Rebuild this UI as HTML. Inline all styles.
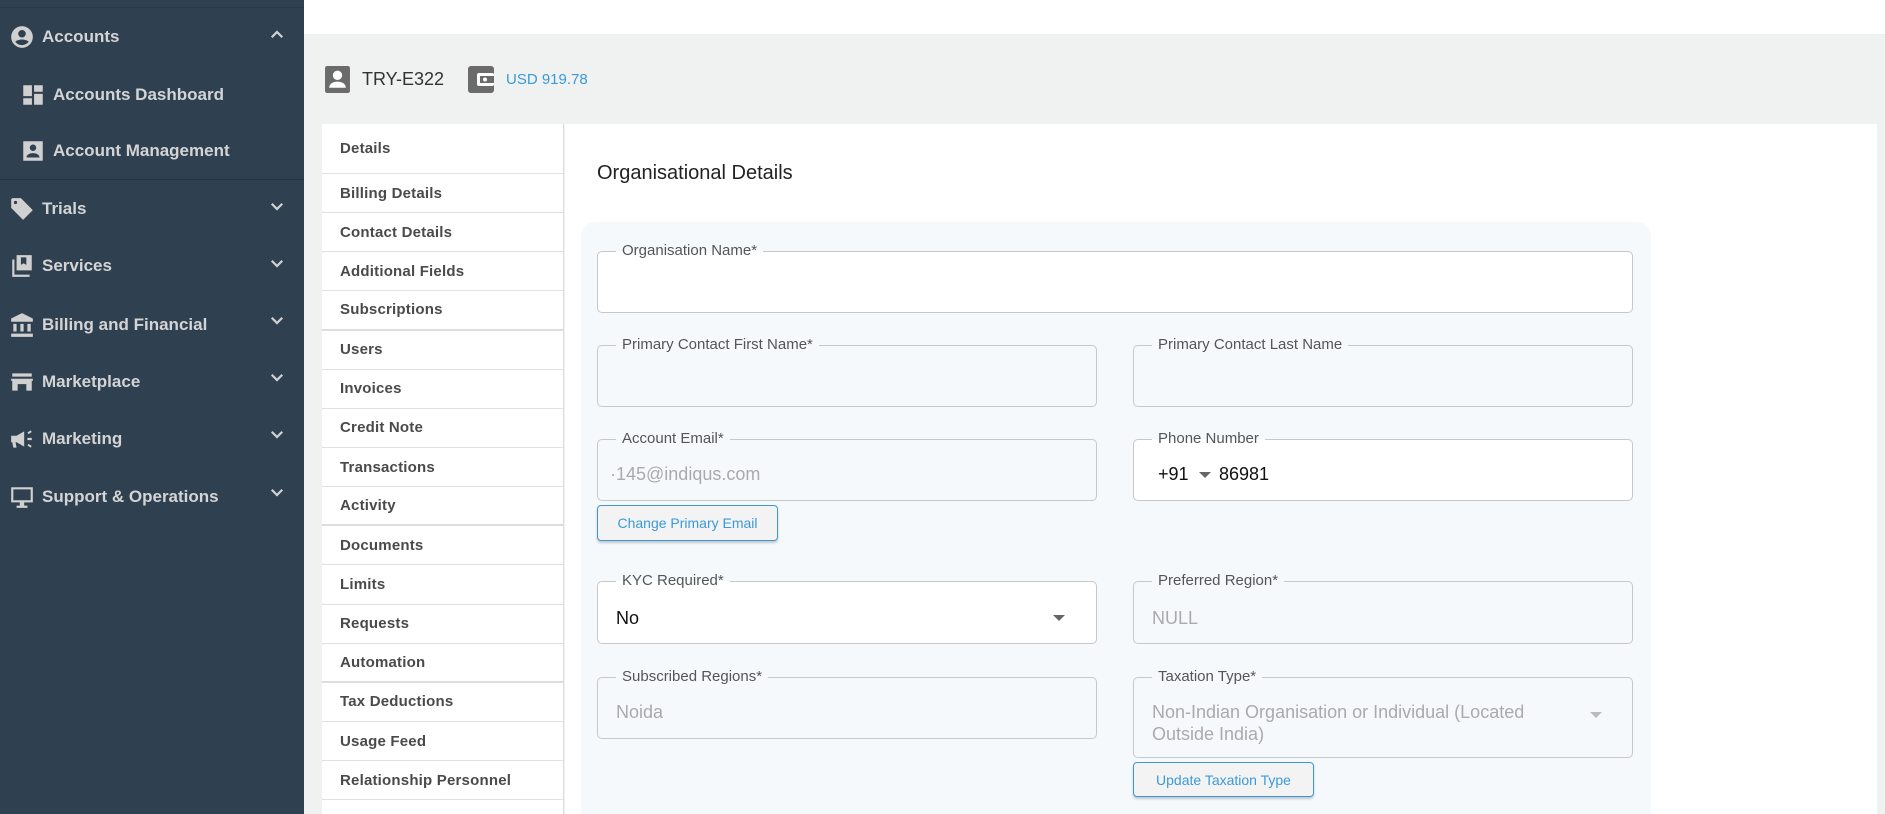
<!DOCTYPE html>
<html style="overflow:hidden"><head><meta charset="utf-8"><style>
*{box-sizing:border-box;margin:0;padding:0}
html,body{width:1885px;height:814px;overflow:hidden}
body{background:#f0f1f1;font-family:"Liberation Sans",sans-serif;position:relative}
.sb{position:absolute;left:0;top:0;width:304px;height:814px;background:#2f4050}
.sb .topline{position:absolute;left:0;top:7px;width:304px;height:1px;background:#2a3a48}
.sep{position:absolute;left:0;top:179px;width:304px;height:1px;background:#26343f}
.ni{position:absolute;left:9px;color:#d4d4d4;font-size:17px;font-weight:bold;display:flex;align-items:center;height:30px}
.ni svg{width:26px;height:26px;margin-right:7px;fill:#d0d0d0}
.ni.sub{left:20px}
.chev{position:absolute;left:268px;width:18px;height:18px}
.topbar{position:absolute;left:304px;top:0;width:1581px;height:34px;background:#fff}
.hdr{position:absolute;top:64px;height:30px;display:flex;align-items:center}
.tabs{position:absolute;left:322px;top:124px;width:242px;height:690px;background:#fff;border-right:1px solid #ddd}
.tab{height:39.15px;border-bottom:1px solid #e2e2e2;padding-left:18px;display:flex;align-items:center;font-size:15px;font-weight:bold;color:#4a4a4a;letter-spacing:.2px}
.tab.first{height:50px}
.main{position:absolute;left:565px;top:124px;width:1312px;height:690px;background:#fff}
.card{position:absolute;left:581px;top:222px;width:1070px;height:592px;background:#f6f9fc;border-radius:14px 14px 0 0}
.f{position:absolute;border:1px solid #c8c8c8;border-radius:5px;background:#f6f9fc}
.f.w{background:#fff}
.f .lb{position:absolute;left:18px;top:-10px;padding:0 6px;font-size:15px;color:#555;line-height:18px}
.f.w .lb{background:linear-gradient(#f6f9fc 50%,#fff 50%)}
.f:not(.w) .lb{background:#f6f9fc}
.f .v{position:absolute;left:18px;top:24px;font-size:18px;color:#aaa}
.f.w .v{color:#111}
.btn{position:absolute;border:1px solid #3a9ad9;border-radius:4px;background:#f3f3f3;color:#3a9ad9;font-size:14px;display:flex;align-items:center;justify-content:center;box-shadow:0 2px 2px rgba(0,0,0,.2)}
.tri{position:absolute;width:0;height:0;border-left:6px solid transparent;border-right:6px solid transparent;border-top:6px solid #666}
</style></head><body>
<div class="sb">
<div class="topline"></div>
<div class="ni" style="top:22px"><svg viewBox="0 0 24 24"><path d="M12 2a10 10 0 1 0 0 20 10 10 0 0 0 0-20zm0 3.5a3.5 3.5 0 1 1 0 7 3.5 3.5 0 0 1 0-7zm0 14c-2.5 0-4.8-1.2-6.2-3.1C6.9 15 10 14.3 12 14.3s5.1.7 6.2 2.1A7.9 7.9 0 0 1 12 19.5z"/></svg>Accounts</div>
<svg class="chev" style="top:26px" viewBox="0 0 24 24"><path d="M5 15l7-7 7 7" stroke="#d0d0d0" stroke-width="3" fill="none"/></svg>
<div class="ni sub" style="top:80px"><svg viewBox="0 0 24 24"><path d="M3 3h8v10H3zM13 3h8v6h-8zM13 11h8v10h-8zM3 15h8v6H3z"/></svg>Accounts Dashboard</div>
<div class="ni sub" style="top:136px"><svg viewBox="0 0 24 24"><path d="M3 3h18v18H3zM12 6a3 3 0 1 0 0 6 3 3 0 0 0 0-6zm-6 12h12c0-2.5-3-4-6-4s-6 1.5-6 4z" fill-rule="evenodd"/></svg>Account Management</div>
<div class="sep"></div>
<div class="ni" style="top:194px"><svg viewBox="0 0 24 24"><path d="M2 3v8l11 11 9-9L11 2H3zm4 1.5a1.5 1.5 0 1 1 0 3 1.5 1.5 0 0 1 0-3z"/></svg>Trials</div>
<div class="ni" style="top:251px"><svg viewBox="0 0 24 24"><path d="M7 2h14v14H7zM3 6h2v14h14v2H3z M11 4v7l2.5-1.5L16 11V4z" fill-rule="evenodd"/></svg>Services</div>
<div class="ni" style="top:310px"><svg viewBox="0 0 24 24"><path d="M12 1l10 5v3H2V6zM4 11h3v7H4zM10.5 11h3v7h-3zM17 11h3v7h-3zM2 20h20v3H2z"/></svg>Billing and Financial</div>
<div class="ni" style="top:367px"><svg viewBox="0 0 24 24"><path d="M3 4h18v3H3zM2 9h20v2h-1v9h-5v-6H8v6H3v-9H2z"/></svg>Marketplace</div>
<div class="ni" style="top:424px"><svg viewBox="0 0 24 24"><path d="M2 9h5l7-4v14l-7-4H6l1 5H4l-1-5H2zM17 11h4v2h-4zM17 6l3-2 1 1.5-3 2zM17 18l3 2 1-1.5-3-2z"/></svg>Marketing</div>
<div class="ni" style="top:482px"><svg viewBox="0 0 24 24"><path d="M2 3h20v14h-8v3h3v2H7v-2h3v-3H2zm2 2v10h16V5z" fill-rule="evenodd"/></svg>Support &amp; Operations</div>
<svg class="chev" style="top:197px" viewBox="0 0 24 24"><path d="M5 9l7 7 7-7" stroke="#d0d0d0" stroke-width="3" fill="none"/></svg>
<svg class="chev" style="top:254px" viewBox="0 0 24 24"><path d="M5 9l7 7 7-7" stroke="#d0d0d0" stroke-width="3" fill="none"/></svg>
<svg class="chev" style="top:311px" viewBox="0 0 24 24"><path d="M5 9l7 7 7-7" stroke="#d0d0d0" stroke-width="3" fill="none"/></svg>
<svg class="chev" style="top:368px" viewBox="0 0 24 24"><path d="M5 9l7 7 7-7" stroke="#d0d0d0" stroke-width="3" fill="none"/></svg>
<svg class="chev" style="top:425px" viewBox="0 0 24 24"><path d="M5 9l7 7 7-7" stroke="#d0d0d0" stroke-width="3" fill="none"/></svg>
<svg class="chev" style="top:483px" viewBox="0 0 24 24"><path d="M5 9l7 7 7-7" stroke="#d0d0d0" stroke-width="3" fill="none"/></svg>
</div>
<div class="topbar"></div>
<div class="hdr" style="left:325px"><svg width="25" height="27" viewBox="0 0 24 26"><rect x="0" y="0" width="24" height="26" rx="2" fill="#6b6b6b"/><circle cx="12" cy="9" r="4.5" fill="#fff"/><path d="M4 21c0-4 4-6 8-6s8 2 8 6z" fill="#fff"/></svg><span style="margin-left:12px;font-size:18px;color:#333">TRY-E322</span></div>
<div class="hdr" style="left:468px"><svg width="26" height="27" viewBox="0 0 26 27"><rect x="0" y="0" width="26" height="27" rx="3" fill="#6b6b6b"/><rect x="9" y="7" width="17" height="13" rx="2" fill="#fff"/><rect x="12" y="10" width="14" height="7" fill="#6b6b6b"/><circle cx="17" cy="13.5" r="2" fill="#fff"/></svg><span style="margin-left:12px;font-size:15px;color:#3a9ad9">USD 919.78</span></div>
<div class="tabs">
<div class="tab first">Details</div><div class="tab">Billing Details</div><div class="tab">Contact Details</div><div class="tab">Additional Fields</div><div class="tab" style="border-bottom:2px solid #ddd">Subscriptions</div><div class="tab">Users</div><div class="tab">Invoices</div><div class="tab">Credit Note</div><div class="tab">Transactions</div><div class="tab" style="border-bottom:2px solid #ddd">Activity</div><div class="tab">Documents</div><div class="tab">Limits</div><div class="tab">Requests</div><div class="tab" style="border-bottom:2px solid #ddd">Automation</div><div class="tab">Tax Deductions</div><div class="tab">Usage Feed</div><div class="tab">Relationship Personnel</div>
</div>
<div class="main"><div style="position:absolute;left:32px;top:38px;font-size:20px;color:#222">Organisational Details</div></div>
<div class="card"></div>
<div class="f w" style="left:597px;top:251px;width:1036px;height:62px"><span class="lb">Organisation Name*</span></div>
<div class="f" style="left:597px;top:345px;width:500px;height:62px"><span class="lb">Primary Contact First Name*</span></div>
<div class="f" style="left:1133px;top:345px;width:500px;height:62px"><span class="lb">Primary Contact Last Name</span></div>
<div class="f" style="left:597px;top:439px;width:500px;height:62px"><span class="lb">Account Email*</span><span class="v" style="left:12px">·145@indiqus.com</span></div>
<div class="f w" style="left:1133px;top:439px;width:500px;height:62px"><span class="lb">Phone Number</span><span class="v" style="left:24px">+91</span><div class="tri" style="left:65px;top:32px"></div><span class="v" style="left:85px">86981</span></div>
<div class="btn" style="left:597px;top:505px;width:181px;height:36px">Change Primary Email</div>
<div class="f w" style="left:597px;top:581px;width:500px;height:63px"><span class="lb">KYC Required*</span><span class="v" style="top:26px">No</span><div class="tri" style="left:455px;top:33px"></div></div>
<div class="f" style="left:1133px;top:581px;width:500px;height:63px"><span class="lb">Preferred Region*</span><span class="v" style="top:26px">NULL</span></div>
<div class="f" style="left:597px;top:677px;width:500px;height:62px"><span class="lb">Subscribed Regions*</span><span class="v">Noida</span></div>
<div class="f" style="left:1133px;top:677px;width:500px;height:81px"><span class="lb">Taxation Type*</span><span class="v" style="top:23px;line-height:22px;width:400px">Non-Indian Organisation or Individual (Located Outside India)</span><div class="tri" style="left:456px;top:34px;border-top-color:#bbb"></div></div>
<div class="btn" style="left:1133px;top:762px;width:181px;height:35px">Update Taxation Type</div>
</body></html>
